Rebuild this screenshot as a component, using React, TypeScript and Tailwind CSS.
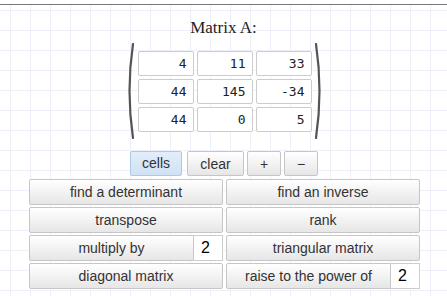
import React from "react";

const btn =
  "h-full flex items-center justify-center border border-[#c6c6c6] rounded-[2px] bg-[linear-gradient(to_bottom,#ffffff,#e6e6e6)] text-[#333] text-[14px] leading-none font-['Liberation_Sans',Arial,sans-serif]";

function Paren({ right }: { right?: boolean }) {
  return (
    <svg width="8" height="96" viewBox="0 0 8 96" className="shrink-0">
      <path
        d={right ? "M2 1 Q9 48 2 95" : "M6 1 Q-1 48 6 95"}
        fill="none"
        stroke="#555"
        strokeWidth="2.2"
        strokeLinecap="round"
      />
    </svg>
  );
}

export default function App() {
  const cells = ["4", "11", "33", "44", "145", "-34", "44", "0", "5"];
  return (
    <div className="w-[447px] h-[296px] overflow-hidden bg-white bg-[linear-gradient(to_right,#efeffa_1px,transparent_1px),linear-gradient(to_bottom,#efeffa_1px,transparent_1px)] bg-[size:20px_20px] bg-[position:10px_10px]">
      <div className="h-[4px] bg-white" />
      <div className="h-px bg-[#777]" />
      <div className="mt-[13px] h-[20px] leading-[20px] text-center text-[17px] text-[#222] font-['Liberation_Serif','Times_New_Roman',serif]">
        Matrix A:
      </div>
      <div className="mt-[5px] flex items-center justify-center pl-[1px]">
        <Paren />
        <div className="ml-[3px] mr-[2px] grid grid-cols-[56px_56px_56px] gap-[3px]">
          {cells.map((c, i) => (
            <input
              key={i}
              defaultValue={c}
              className="w-[56px] h-[25px] border border-[#cccccc] rounded-[2px] bg-white text-right pr-[6px] text-[13px] text-[#222] font-['DejaVu_Sans_Mono',monospace] outline-none"
            />
          ))}
        </div>
        <Paren right />
      </div>
      <div className="mt-[12px] h-[25px] flex justify-center pl-[1px] font-['Liberation_Sans',Arial,sans-serif]">
        <div className="w-[52px] h-full flex items-center justify-center border border-[#adc9e6] rounded-[2px] bg-[linear-gradient(to_bottom,#e2eefa,#cfe2f5)] text-[#333] text-[14px]">
          cells
        </div>
        <div className={`${btn} w-[57px] ml-[5px]`}>clear</div>
        <div className={`${btn} w-[34px] ml-[3px]`}>+</div>
        <div className={`${btn} w-[34px] ml-[3px]`}>−</div>
      </div>
      <div className="mt-[3px] ml-[29px] grid grid-cols-[194px_194px] auto-rows-[26px] gap-x-[3px] gap-y-[2px]">
        <div className={btn}>find a determinant</div>
        <div className={btn}>find an inverse</div>
        <div className={btn}>transpose</div>
        <div className={btn}>rank</div>
        <div className="flex h-full">
          <div className={`${btn} flex-1 rounded-r-none`}>multiply by</div>
          <input
            defaultValue="2"
            className="w-[29px] h-full border border-l-0 border-[#cccccc] bg-white pl-[7px] text-[16px] text-black font-['Liberation_Sans',Arial,sans-serif] outline-none"
          />
        </div>
        <div className={btn}>triangular matrix</div>
        <div className={btn}>diagonal matrix</div>
        <div className="flex h-full">
          <div className={`${btn} flex-1 rounded-r-none`}>raise to the power of</div>
          <input
            defaultValue="2"
            className="w-[29px] h-full border border-l-0 border-[#cccccc] bg-white pl-[7px] text-[16px] text-black font-['Liberation_Sans',Arial,sans-serif] outline-none"
          />
        </div>
      </div>
      <div className="mt-[7px] ml-[352px] w-[100px] h-[10px] border-t border-l border-[#bbbbbb] bg-white" />
    </div>
  );
}
